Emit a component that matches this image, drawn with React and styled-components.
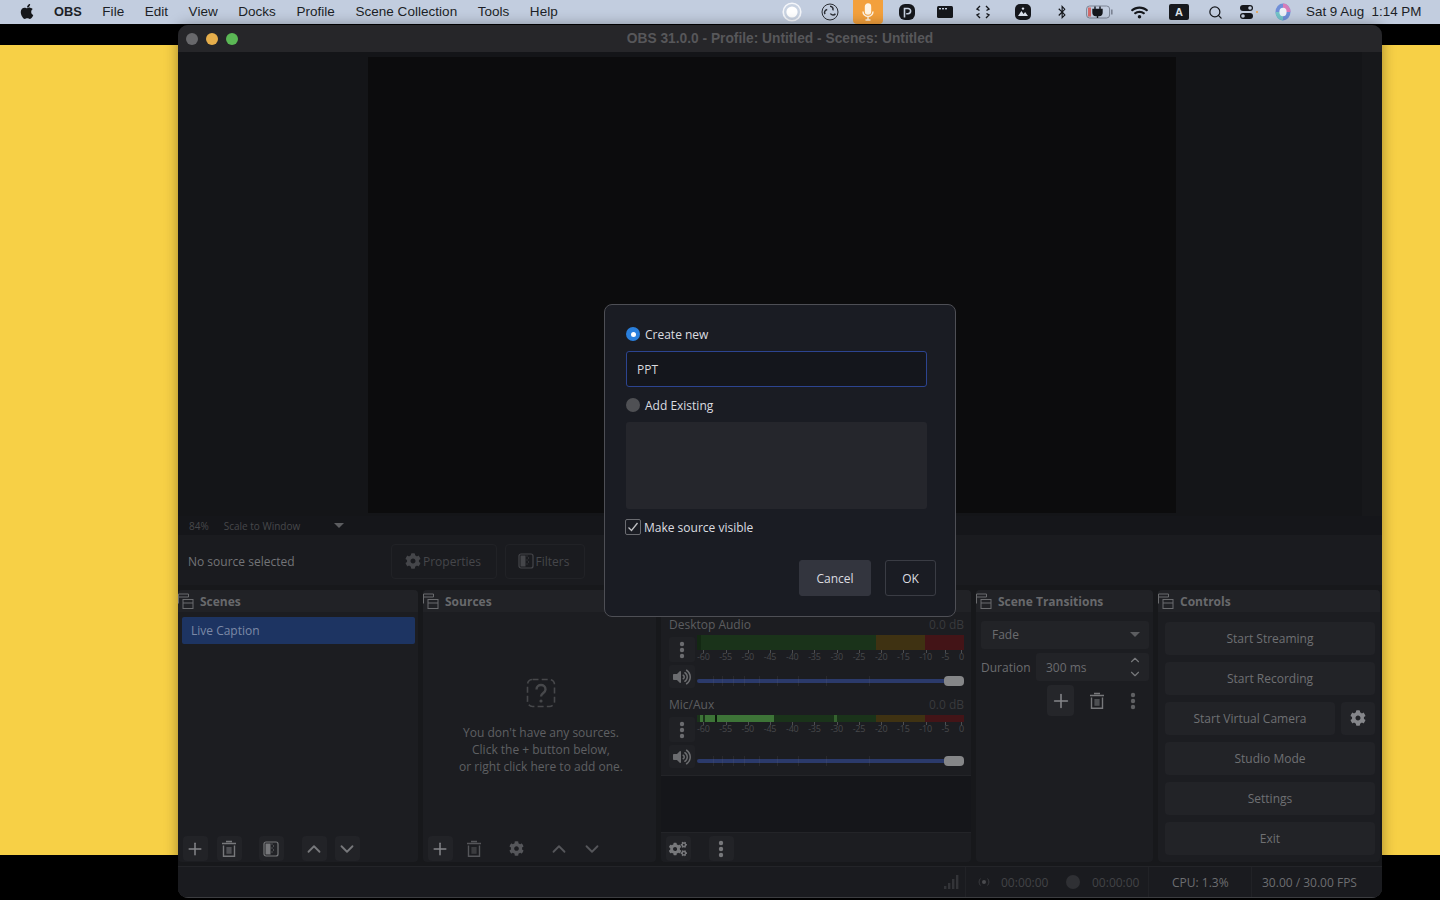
import React from 'react';
import styled, { createGlobalStyle } from 'styled-components';
import { FaApple, FaBluetoothB, FaWifi, FaCog, FaCogs, FaVolumeUp } from 'react-icons/fa';
import { Plus, ChevronUp, ChevronDown, Search } from 'lucide-react';

const Global = createGlobalStyle`
  html, body { margin: 0; padding: 0; width: 1440px; height: 900px; overflow: hidden; background: #000; }
  * { box-sizing: border-box; }
`;

const Page = styled.div`
  position: relative; width: 1440px; height: 900px; overflow: hidden;
  display: flex; flex-direction: column; background: #000;
  font-family: "Open Sans", "Liberation Sans", sans-serif;
`;
const MenuBar = styled.header`
  height: 24px; flex: none; display: flex; align-items: center; background: #c2cddf;
  font-family: "Liberation Sans", Arial, sans-serif; font-size: 13.5px; color: #1c1f26;
`;
const MenuLeft = styled.nav`display: flex; align-items: center; gap: 20.5px; padding: 0 0 2px 19.5px;`;
const AppleMark = styled.span`display: flex; width: 14px; font-size: 17px; color: #14161a;`;
const MenuItem = styled.span`
  font-weight: ${p => (p.$bold ? 700 : 400)}; font-size: ${p => (p.$bold ? '12.8px' : '13.5px')}; white-space: nowrap; letter-spacing: 0.03px;
`;
const MenuRight = styled.div`margin-left: auto; display: flex; align-items: center; height: 24px; padding-right: 18px;`;
const Slot = styled.span`
  width: ${p => p.$w}px; height: 24px; display: flex; align-items: center; justify-content: center; color: #15171c;
`;
const MicTile = styled.span`
  width: 30px; height: 24px; border-radius: 0 0 4px 4px; background: #f3a03c; display: flex; align-items: center; justify-content: center;
`;
const BlackA = styled.span`
  width: 20px; height: 16px; border-radius: 2px; background: #17191e; color: #dfe3ea; font-size: 11px; font-weight: 700;
  display: flex; align-items: center; justify-content: center;
`;
const Clock = styled.span`margin: 0 0 2px 5px; width: 116px; white-space: nowrap; font-size: 13.4px;`;

const TopStrip = styled.div`height: 21px; flex: none; background: #000;`;
const Wall = styled.div`height: 810px; flex: none; background: #f7d046;`;
const BottomStrip = styled.div`flex: 1; background: #000;`;

const Win = styled.section`
  position: absolute; left: 178px; top: 25px; width: 1204px; height: 873px;
  border-radius: 10px; overflow: hidden; background: #17181b; display: flex; flex-direction: column;
  box-shadow: 0 0 14px rgba(0,0,0,.35), inset 0 -1px 0 #3c3d40;
`;
const TitleBar = styled.div`
  height: 27px; flex: none; position: relative; background: #262629; display: flex; align-items: center; justify-content: center;
  font-size: 13.75px; font-weight: 700; color: #57575a; font-family: "Liberation Sans", Arial, sans-serif;
`;
const Lights = styled.div`position: absolute; left: 8px; top: 8px; display: flex; gap: 8px;`;
const Light = styled.i`width: 12px; height: 12px; border-radius: 50%; background: ${p => p.$c};`;
const PreviewRow = styled.div`height: 464px; flex: none; background: #17181b; display: flex;`;
const PreviewPane = styled.div`
  width: 1184px; padding: 5px 0 3px; background: #141518; display: flex; justify-content: center;
`;
const Canvas = styled.div`width: 808px; margin-right: -4px; background: #0c0c0d;`;
const ZoomRow = styled.div`
  height: 19px; flex: none; background: #15161a; display: flex; align-items: center; padding-left: 11px;
  font-size: 10px; color: #47484b;
`;
const ZoomScale = styled.span`margin-left: 15px; width: 110px;`;
const Caret = styled.i`
  width: 0; height: 0; border-left: 5px solid transparent; border-right: 5px solid transparent; border-top: 5px solid ${p => p.$c || '#5c5d60'};
`;
const SourceBar = styled.div`
  height: 50px; flex: none; background: #1a1b1f; display: flex; align-items: center; padding: 2px 0 0 10px;
  font-size: 12px; color: #737477;
`;
const NoSource = styled.span`width: 203px;`;
const GhostBtn = styled.div`
  height: 35px; width: ${p => p.$w}px; margin-right: 8px; border: 1px solid #212226; border-radius: 4px; padding-right: ${p => p.$pr || 0}px;
  display: flex; align-items: center; justify-content: center; gap: 2px; color: #45464a; font-size: 12px;
`;
const Docks = styled.div`height: 272px; flex: none; display: flex; gap: 5px; margin-top: 5px;`;
const Dock = styled.section`
  width: ${p => p.$w}px; flex: none; display: flex; flex-direction: column; background: #1c1d21; border-radius: 4px; overflow: hidden;
`;
const DockTitle = styled.h3`
  margin: 0; height: 22px; flex: none; background: #212226; display: flex; align-items: center; gap: 6px;
  font-size: 12px; font-weight: 700; color: #68696c;
`;
const DockBody = styled.div`flex: 1; min-height: 0; display: flex; flex-direction: column;`;
const SceneItem = styled.div`
  margin: 5px 3px 0 4px; height: 27px; background: #1d3462; border-radius: 2px; display: flex; align-items: center; padding-left: 9px;
  font-size: 12px; color: #7c89a6;
`;
const Toolbar = styled.div`
  margin-top: auto; height: 26px; flex: none; display: flex; align-items: flex-start; padding-left: 4.5px;
`;
const ToolBtn = styled.button`
  all: unset; width: 25px; height: 25px; margin-left: ${p => p.$ml || 0}px; border-radius: 4px; background: ${p => (p.$on ? '#222327' : 'transparent')};
  display: flex; align-items: center; justify-content: center; color: ${p => p.$c || '#77787b'};
`;
const Empty = styled.div`
  flex: 1; display: flex; flex-direction: column; align-items: center; padding: 66px 0 0 3px; color: #5f6063; font-size: 12px; line-height: 17px; text-align: center;
`;
const EmptyText = styled.p`margin: 16px 0 0; white-space: pre-line;`;
const Strips = styled.div`flex: none; padding-top: 3px; border-bottom: 1px solid #232428;`;
const Channel = styled.div`
  height: 80px; padding: 0 7px 0 8px; display: grid; grid-template-columns: 26px 1fr; column-gap: 2px;
  grid-template-rows: 20px 28px 26px; align-content: start;
`;
const ChanHead = styled.div`
  grid-column: 1 / 3; display: flex; justify-content: space-between; align-items: center; padding-bottom: 2px; font-size: 12px; color: #5c5d60;
`;
const Db = styled.span`color: #393a3d;`;
const ChanBtn = styled.div`
  background: #202125; border-radius: 3px; margin: 2px 0 1px; display: flex; align-items: center; justify-content: center; color: #6b6c6f;
`;
const MeterWrap = styled.div`display: flex; flex-direction: column;`;
const Meter = styled.div`display: flex; height: ${p => p.$h}px; overflow: hidden;`;
const Seg = styled.i`display: block; width: ${p => p.$w}px; background: ${p => p.$c}; flex: none;`;
const Scale = styled.div`
  display: flex; justify-content: space-between; font-size: 9px; line-height: 12px; color: #47484b; letter-spacing: -0.2px; padding-top: 1px;
`;
const ScaleMark = styled.span`
  position: relative;
  &::before { content: ''; position: absolute; left: 50%; top: -1px; width: 1px; height: 3px; background: #4d4e52; }
`;
const SliderCell = styled.div`position: relative; display: flex; align-items: center; padding-top: 10px;`;
const Track = styled.div`width: 100%; height: 4px; background: #2b3a6b; border-radius: 2px;`;
const SliderTick = styled.i`position: absolute; top: 13px; width: 1px; height: 10px; background: rgba(120,122,130,.14);`;
const Thumb = styled.i`
  position: absolute; right: 0; top: 13px; width: 20px; height: 10px; border-radius: 4px; background: #858688;
`;
const MixBlank = styled.div`flex: 1; background: #15161a;`;
const MixToolbar = styled(Toolbar)`margin-top: 0; height: 30px; padding-top: 3px; background: #1c1d21; border-top: 1px solid #232428;`;
const Combo = styled.div`
  margin: 9px 4px 0 5px; height: 28px; border-radius: 3px; background: #222327; display: flex; align-items: center; justify-content: space-between;
  padding: 0 9px 2px 11px; font-size: 12px; color: #6b6c6f;
`;
const DurRow = styled.div`display: flex; align-items: center; margin: 4px 4px 0 5px; height: 28px; font-size: 12px; color: #6b6c6f;`;
const DurLabel = styled.span`width: 55px;`;
const Spin = styled.div`
  flex: 1; height: 28px; border-radius: 3px; background: #222327; display: flex; align-items: center; justify-content: space-between; padding: 0 7px 0 10px;
`;
const SpinArrows = styled.span`display: flex; flex-direction: column; align-items: center; color: #77787b; line-height: 0;`;
const TransTools = styled.div`display: flex; margin: 4px 0 0 71px; align-items: center;`;
const TransBtn = styled.div`
  width: 27px; height: 31px; margin-left: ${p => p.$ml || 0}px; border-radius: 4px; background: ${p => (p.$on ? '#25262a' : 'transparent')};
  display: flex; align-items: center; justify-content: center; color: #77787b;
`;
const Controls = styled.div`display: flex; flex-direction: column; gap: 7px; padding: 10px 5px 0 7px;`;
const CtlRow = styled.div`display: flex; gap: 6px;`;
const CtlBtn = styled.div`
  flex: ${p => (p.$grow ? 1 : 'none')}; width: ${p => (p.$fixed ? '34px' : 'auto')}; height: 33px; border-radius: 4px; background: #222327; padding-bottom: 1px;
  display: flex; align-items: center; justify-content: center; font-size: 12px; color: #6f7073;
`;
const Status = styled.footer`
  margin-top: 4px; flex: 1; display: flex; border-top: 1px solid #232428; border-bottom: 1px solid #3c3d40; font-size: 12px; color: #6d6e71; background: #1a1b1f;
  padding-left: 765px;
`;
const StatCell = styled.div`
  width: ${p => p.$w}px; flex: none; display: flex; align-items: center; padding-left: ${p => p.$pl}px; border-right: 1px solid ${p => (p.$div ? '#212226' : 'transparent')};
`;
const Time = styled.span`color: #424346; width: 47px; margin-left: ${p => p.$ml || 0}px; white-space: nowrap;`;
const RecDot = styled.i`width: 14px; height: 14px; border-radius: 50%; background: #2f3034; margin: 0 12px 0 18px; flex: none;`;

const Modal = styled.div`
  position: absolute; left: 604px; top: 304px; width: 352px; height: 313px; border-radius: 8px; background: #1a1c23; border: 1px solid #4e4f55;
  padding: 20px 19px 0 21px; display: flex; flex-direction: column; color: #dcdde0; font-size: 12px;
`;
const Form = styled.div`width: 301px; display: flex; flex-direction: column;`;
const RadioRow = styled.label`display: flex; align-items: center; gap: 5px; height: 18px; margin-top: ${p => p.$mt || 0}px;`;
const Radio = styled.i`
  width: 14px; height: 14px; border-radius: 50%; flex: none; display: flex; align-items: center; justify-content: center;
  background: ${p => (p.$on ? '#2a7fdc' : '#4f5054')};
  &::after { content: ''; width: 5px; height: 5px; border-radius: 50%; background: ${p => (p.$on ? '#fff' : 'transparent')}; }
`;
const TextInput = styled.div`
  margin-top: 8px; height: 36px; border: 1px solid #2c4490; border-radius: 3px; background: #14161c; display: flex; align-items: center; padding-left: 10px; font-size: 12px; font-weight: 500; color: #d8d9dc;
`;
const ListBox = styled.div`margin-top: 8px; height: 87px; border-radius: 3px; background: #25262c;`;
const CheckRow = styled.label`display: flex; align-items: center; gap: 3px; margin: 10px 0 0 -1px; height: 16px;`;
const Check = styled.i`
  width: 16px; height: 16px; border: 1px solid #6a6b70; border-radius: 2px; display: flex; align-items: center; justify-content: center; color: #bfc0c3; flex: none;
`;
const ModalActions = styled.div`display: flex; justify-content: flex-end; gap: 14px; margin-top: 25px;`;
const ModalBtn = styled.button`
  all: unset; height: 36px; width: ${p => p.$w}px; border-radius: 3px; box-sizing: border-box; display: flex; align-items: center; justify-content: center; font-size: 12px; font-weight: 500; color: #dcdde0;
  background: ${p => (p.$primary ? '#33353e' : 'transparent')}; border: 1px solid ${p => (p.$primary ? '#33353e' : '#3a3c44')};
`;

const DockIcon = () => (
  <svg width="16" height="16" viewBox="0 0 16 16" fill="none" stroke="#6a6b6e" strokeWidth="1"><path d="M.5 10.5V1h10v3" /><path d="M.5 4h10" /><rect x="5" y="6.5" width="10" height="9" /><path d="M5 10h10" /></svg>
);
const Trash = ({ size = 18, c = '#77787b' }) => (
  <svg width={size} height={size} viewBox="0 0 18 18" fill="none" stroke={c} strokeWidth="1.4"><path d="M2 3.5h14M6 1.5h6" /><path d="M3.5 5.5v10.8h11V5.5" /><rect x="6.4" y="7" width="5.2" height="6.8" fill={c} opacity=".55" stroke="none" /></svg>
);
const FilterIcon = ({ size = 16, c = '#77787b' }) => (
  <svg width={size} height={size} viewBox="0 0 16 16" fill="none"><rect x="1" y="1" width="14" height="14" rx="2" stroke={c} strokeWidth="1.2" /><rect x="2.5" y="2.5" width="5" height="11" fill={c} /><path d="M8.5 3h1M10 5h1M8.5 7h1M10 9h1M8.5 11h1" stroke={c} /></svg>
);
const Dots = ({ c = '#77787b' }) => (
  <svg width="6" height="18" viewBox="0 0 6 18" fill={c}><circle cx="3" cy="3" r="2.2" /><circle cx="3" cy="9" r="2.2" /><circle cx="3" cy="15" r="2.2" /></svg>
);
const Question = () => (
  <svg width="30" height="30" viewBox="0 0 30 30" fill="none" stroke="#47484b" strokeWidth="1.6"><rect x="1.5" y="1.5" width="27" height="27" rx="5" strokeDasharray="6 3.2" /><path d="M10.5 11.5c0-6 9-6 9 0 0 3.4-4.5 3.5-4.5 7" strokeWidth="2.4" /><circle cx="15" cy="23" r="1.6" fill="#47484b" stroke="none" /></svg>
);
const Signal = () => (
  <svg width="16" height="16" viewBox="0 0 16 16" fill="#333438"><rect x="1" y="12" width="2.4" height="3" /><rect x="5" y="9" width="2.4" height="6" /><rect x="9" y="5" width="2.4" height="10" /><rect x="13" y="1" width="2.4" height="14" /></svg>
);
const Broadcast = () => (
  <svg width="14" height="14" viewBox="0 0 14 14" fill="none" stroke="#38393d"><circle cx="7" cy="7" r="2" fill="#4a4b4f" stroke="none" /><path d="M3.5 3.5a5 5 0 0 0 0 7M10.5 3.5a5 5 0 0 1 0 7" /></svg>
);

const statusIcons = [
  [38, <svg width="20" height="20" viewBox="0 0 20 20"><circle cx="10" cy="10" r="8.8" fill="#c9d3e2" stroke="#f4f6fa" strokeWidth="1.6" /><circle cx="10" cy="10" r="5.6" fill="#fff" /></svg>],
  [38, <svg width="18" height="18" viewBox="0 0 18 18" fill="none" stroke="#2b2e35" strokeWidth="1"><circle cx="9" cy="9" r="8" /><path d="M9 3.2a3 3 0 0 1 2.8 4.2M14.4 10.8a3 3 0 0 1-5-.3M4 11.2a3 3 0 0 1 2.2-4.6" strokeWidth="1.5" /></svg>],
  [38.5, <MicTile><svg width="14" height="18" viewBox="0 0 14 18" fill="none" stroke="#fff4e4" strokeWidth="1.4"><rect x="4.5" y="1" width="5" height="10" rx="2.5" fill="#fff4e4" /><path d="M2 8.5a5 5 0 0 0 10 0M7 13.5V17M4.5 17h5" /></svg></MicTile>],
  [38, <svg width="18" height="18" viewBox="0 0 18 18"><rect x="1" y="1" width="16" height="16" rx="6" fill="#15171c" /><path d="M6.5 14.5V5.5h3.5a2.6 2.6 0 0 1 0 5.2H8.2" fill="none" stroke="#c6d0e0" strokeWidth="1.6" /></svg>],
  [38, <svg width="16" height="14" viewBox="0 0 16 14"><rect y="1" width="16" height="12" rx="1.5" fill="#15171c" /><rect x="2" y="3" width="2" height="1.4" fill="#c6d0e0" /><rect x="5" y="3" width="2" height="1.4" fill="#c6d0e0" /><rect x="8" y="3" width="2" height="1.4" fill="#c6d0e0" /></svg>],
  [39.5, <svg width="16" height="16" viewBox="0 0 16 16" fill="none" stroke="#15171c" strokeWidth="1.4"><path d="M5 2L2 5l2.500 1.500M11 2l3 3-2.500 1.500M5 14l-3-3 2.500-1.500M11 14l3-3-2.500-1.500" /></svg>],
  [39.5, <svg width="18" height="18" viewBox="0 0 18 18"><rect x="1" y="1" width="16" height="16" rx="5" fill="#15171c" /><path d="M4 13l3.4-5 2.2 3 1.5-2 2.9 4z" fill="#dce3ee" /><circle cx="9" cy="5.6" r="1.2" fill="#dce3ee" /></svg>],
  [38, <FaBluetoothB size={14} />],
  [38.5, <svg width="28" height="14" viewBox="0 0 28 14" fill="none"><rect x=".6" y="1" width="23" height="12" rx="3" stroke="#7c8494" /><rect x="2" y="2.500" width="3" height="9" fill="#d46a6a" /><rect x="25" y="4.500" width="1.6" height="5" fill="#7c8494" /><path d="M9 1.500v3M14 1.500v3M7 4.500h9v3a3 3 0 0 1-3 3h-3a3 3 0 0 1-3-3zM11.500 10v3" stroke="#15171c" strokeWidth="1.4" fill="#15171c" /></svg>],
  [40.5, <FaWifi size={17} />],
  [39, <BlackA>A</BlackA>],
  [34, <Search size={15} strokeWidth={2} />],
  [33, <svg width="20" height="14" viewBox="0 0 20 14"><rect x="1" y="0" width="13" height="6" rx="3" fill="#15171c" /><circle cx="11" cy="3" r="1.8" fill="#c2cddf" /><rect x="1" y="8" width="13" height="6" rx="3" fill="#15171c" /><circle cx="4" cy="11" r="1.8" fill="#c2cddf" /><circle cx="18" cy="7" r="1" fill="#f0a040" /></svg>],
  [35.5, <svg width="16" height="18" viewBox="0 0 16 18"><ellipse cx="8" cy="9" rx="7.500" ry="8.500" fill="#6f8fd8" /><path d="M8 .5A7.500 8.500 0 0 1 15.500 9H8z" fill="#d87cb8" /><path d="M8 17.500A7.500 8.500 0 0 1 .5 9H8z" fill="#74c4c8" /><ellipse cx="8" cy="9" rx="3.600" ry="4.200" fill="#eef2f8" /></svg>],
];

const scale = ['-60', '-55', '-50', '-45', '-40', '-35', '-30', '-25', '-20', '-15', '-10', '-5', '0'];
const sliderTicks = [16, 25, 36, 47, 62, 80, 101, 129, 172];

const Levels = ({ active }) => (
  <Meter $h={active ? 7 : 15}>
    {active ? (
      <>
        <Seg $w={3} $c="#1a331a" /><Seg $w={3} $c="#3d7437" /><Seg $w={2} $c="#1a331a" /><Seg $w={10} $c="#3d7437" /><Seg $w={2} $c="#0b1a0b" /><Seg $w={57} $c="#3d7437" />
        <Seg $w={60} $c="#1a331a" /><Seg $w={3} $c="#35622f" /><Seg $w={39} $c="#1a331a" />
      </>
    ) : (
      <>
        <Seg $w={4} $c="#132813" /><Seg $w={175} $c="#1a331a" />
      </>
    )}
    <Seg $w={49} $c="#3f3212" /><Seg $w={39} $c="#431417" />
  </Meter>
);

const MixerChannel = ({ name, active }) => (
  <Channel>
    <ChanHead><span>{name}</span><Db>0.0 dB</Db></ChanHead>
    <ChanBtn><Dots c="#6b6c6f" /></ChanBtn>
    <MeterWrap>
      <Levels active={active} />
      <Scale>{scale.map(s => <ScaleMark key={s}>{s}</ScaleMark>)}</Scale>
    </MeterWrap>
    <ChanBtn><FaVolumeUp size={18} /></ChanBtn>
    <SliderCell>
      <Track />
      {sliderTicks.map(x => <SliderTick key={x} style={{ left: x }} />)}
      <Thumb />
    </SliderCell>
  </Channel>
);

const ListTools = ({ mid, dim }) => {
  const c = dim ? '#55565a' : '#77787b';
  return (
    <Toolbar>
      <ToolBtn $on><Plus size={20} strokeWidth={1.8} color="#85868a" /></ToolBtn>
      <ToolBtn $ml={9} $on={!dim}><Trash c={c} /></ToolBtn>
      <ToolBtn $ml={17} $on={!dim}>{mid}</ToolBtn>
      <ToolBtn $ml={18} $on={!dim}><ChevronUp size={22} color={c} /></ToolBtn>
      <ToolBtn $ml={8} $on={!dim}><ChevronDown size={22} color={c} /></ToolBtn>
    </Toolbar>
  );
};

export default function App() {
  return (
    <Page>
      <Global />
      <MenuBar>
        <MenuLeft>
          <AppleMark><FaApple /></AppleMark>
          <MenuItem $bold>OBS</MenuItem>
          {['File', 'Edit', 'View', 'Docks', 'Profile', 'Scene Collection', 'Tools', 'Help'].map(m => <MenuItem key={m}>{m}</MenuItem>)}
        </MenuLeft>
        <MenuRight>
          {statusIcons.map(([w, icon], i) => <Slot key={i} $w={w}>{icon}</Slot>)}
          <Clock>Sat 9 Aug&nbsp; 1:14 PM</Clock>
        </MenuRight>
      </MenuBar>
      <TopStrip />
      <Wall />
      <BottomStrip />

      <Win>
        <TitleBar>
          <Lights><Light $c="#68686b" /><Light $c="#e6ae4b" /><Light $c="#5bb855" /></Lights>
          OBS 31.0.0 - Profile: Untitled - Scenes: Untitled
        </TitleBar>
        <PreviewRow>
          <PreviewPane><Canvas /></PreviewPane>
        </PreviewRow>
        <ZoomRow>84%<ZoomScale>Scale to Window</ZoomScale><Caret /></ZoomRow>
        <SourceBar>
          <NoSource>No source selected</NoSource>
          <GhostBtn $w={106} $pr={2}><FaCog size={16} />Properties</GhostBtn>
          <GhostBtn $w={80} $pr={3}><FilterIcon c="#45464a" />Filters</GhostBtn>
        </SourceBar>
        <Docks>
          <Dock $w={240}>
            <DockTitle><DockIcon />Scenes</DockTitle>
            <DockBody>
              <SceneItem>Live Caption</SceneItem>
              <ListTools mid={<FilterIcon />} />
            </DockBody>
          </Dock>
          <Dock $w={233}>
            <DockTitle><DockIcon />Sources</DockTitle>
            <DockBody>
              <Empty>
                <Question />
                <EmptyText>{"You don't have any sources.\nClick the + button below,\nor right click here to add one."}</EmptyText>
              </Empty>
              <ListTools dim mid={<FaCog size={15} color="#55565a" />} />
            </DockBody>
          </Dock>
          <Dock $w={310}>
            <DockTitle><DockIcon />Audio Mixer</DockTitle>
            <DockBody>
              <Strips>
                <MixerChannel name="Desktop Audio" />
                <MixerChannel name="Mic/Aux" active />
              </Strips>
              <MixBlank />
              <MixToolbar>
                <ToolBtn $on><FaCogs size={18} /></ToolBtn>
                <ToolBtn $ml={18} $on><Dots /></ToolBtn>
              </MixToolbar>
            </DockBody>
          </Dock>
          <Dock $w={177}>
            <DockTitle><DockIcon />Scene Transitions</DockTitle>
            <DockBody>
              <Combo>Fade<Caret /></Combo>
              <DurRow>
                <DurLabel>Duration</DurLabel>
                <Spin>300 ms<SpinArrows><ChevronUp size={14} /><ChevronDown size={14} /></SpinArrows></Spin>
              </DurRow>
              <TransTools>
                <TransBtn $on><Plus size={22} strokeWidth={1.7} color="#85868a" /></TransBtn>
                <TransBtn $ml={9}><Trash /></TransBtn>
                <TransBtn $ml={9}><Dots c="#5f6063" /></TransBtn>
              </TransTools>
            </DockBody>
          </Dock>
          <Dock $w={222}>
            <DockTitle><DockIcon />Controls</DockTitle>
            <Controls>
              <CtlBtn>Start Streaming</CtlBtn>
              <CtlBtn>Start Recording</CtlBtn>
              <CtlRow>
                <CtlBtn $grow>Start Virtual Camera</CtlBtn>
                <CtlBtn $fixed><FaCog size={16} color="#85868a" /></CtlBtn>
              </CtlRow>
              <CtlBtn>Studio Mode</CtlBtn>
              <CtlBtn>Settings</CtlBtn>
              <CtlBtn>Exit</CtlBtn>
            </Controls>
          </Dock>
        </Docks>
        <Status>
          <StatCell $w={23} $pl={0} $div><Signal /></StatCell>
          <StatCell $w={183} $pl={11} $div>
            <Broadcast />
            <Time $ml={10}>00:00:00</Time>
            <RecDot />
            <Time>00:00:00</Time>
          </StatCell>
          <StatCell $w={103} $pl={23} $div>CPU: 1.3%</StatCell>
          <StatCell $w={120} $pl={10}>30.00 / 30.00 FPS</StatCell>
        </Status>
      </Win>

      <Modal>
        <Form>
          <RadioRow><Radio $on />Create new</RadioRow>
          <TextInput>PPT</TextInput>
          <RadioRow $mt={9}><Radio />Add Existing</RadioRow>
          <ListBox />
          <CheckRow>
            <Check><svg width="12" height="12" viewBox="0 0 12 12" fill="none" stroke="currentColor" strokeWidth="1.3"><path d="M1.500 6.500l3 3 6-7.500" /></svg></Check>
            Make source visible
          </CheckRow>
        </Form>
        <ModalActions>
          <ModalBtn $primary $w={72}>Cancel</ModalBtn>
          <ModalBtn $w={51}>OK</ModalBtn>
        </ModalActions>
      </Modal>
    </Page>
  );
}
